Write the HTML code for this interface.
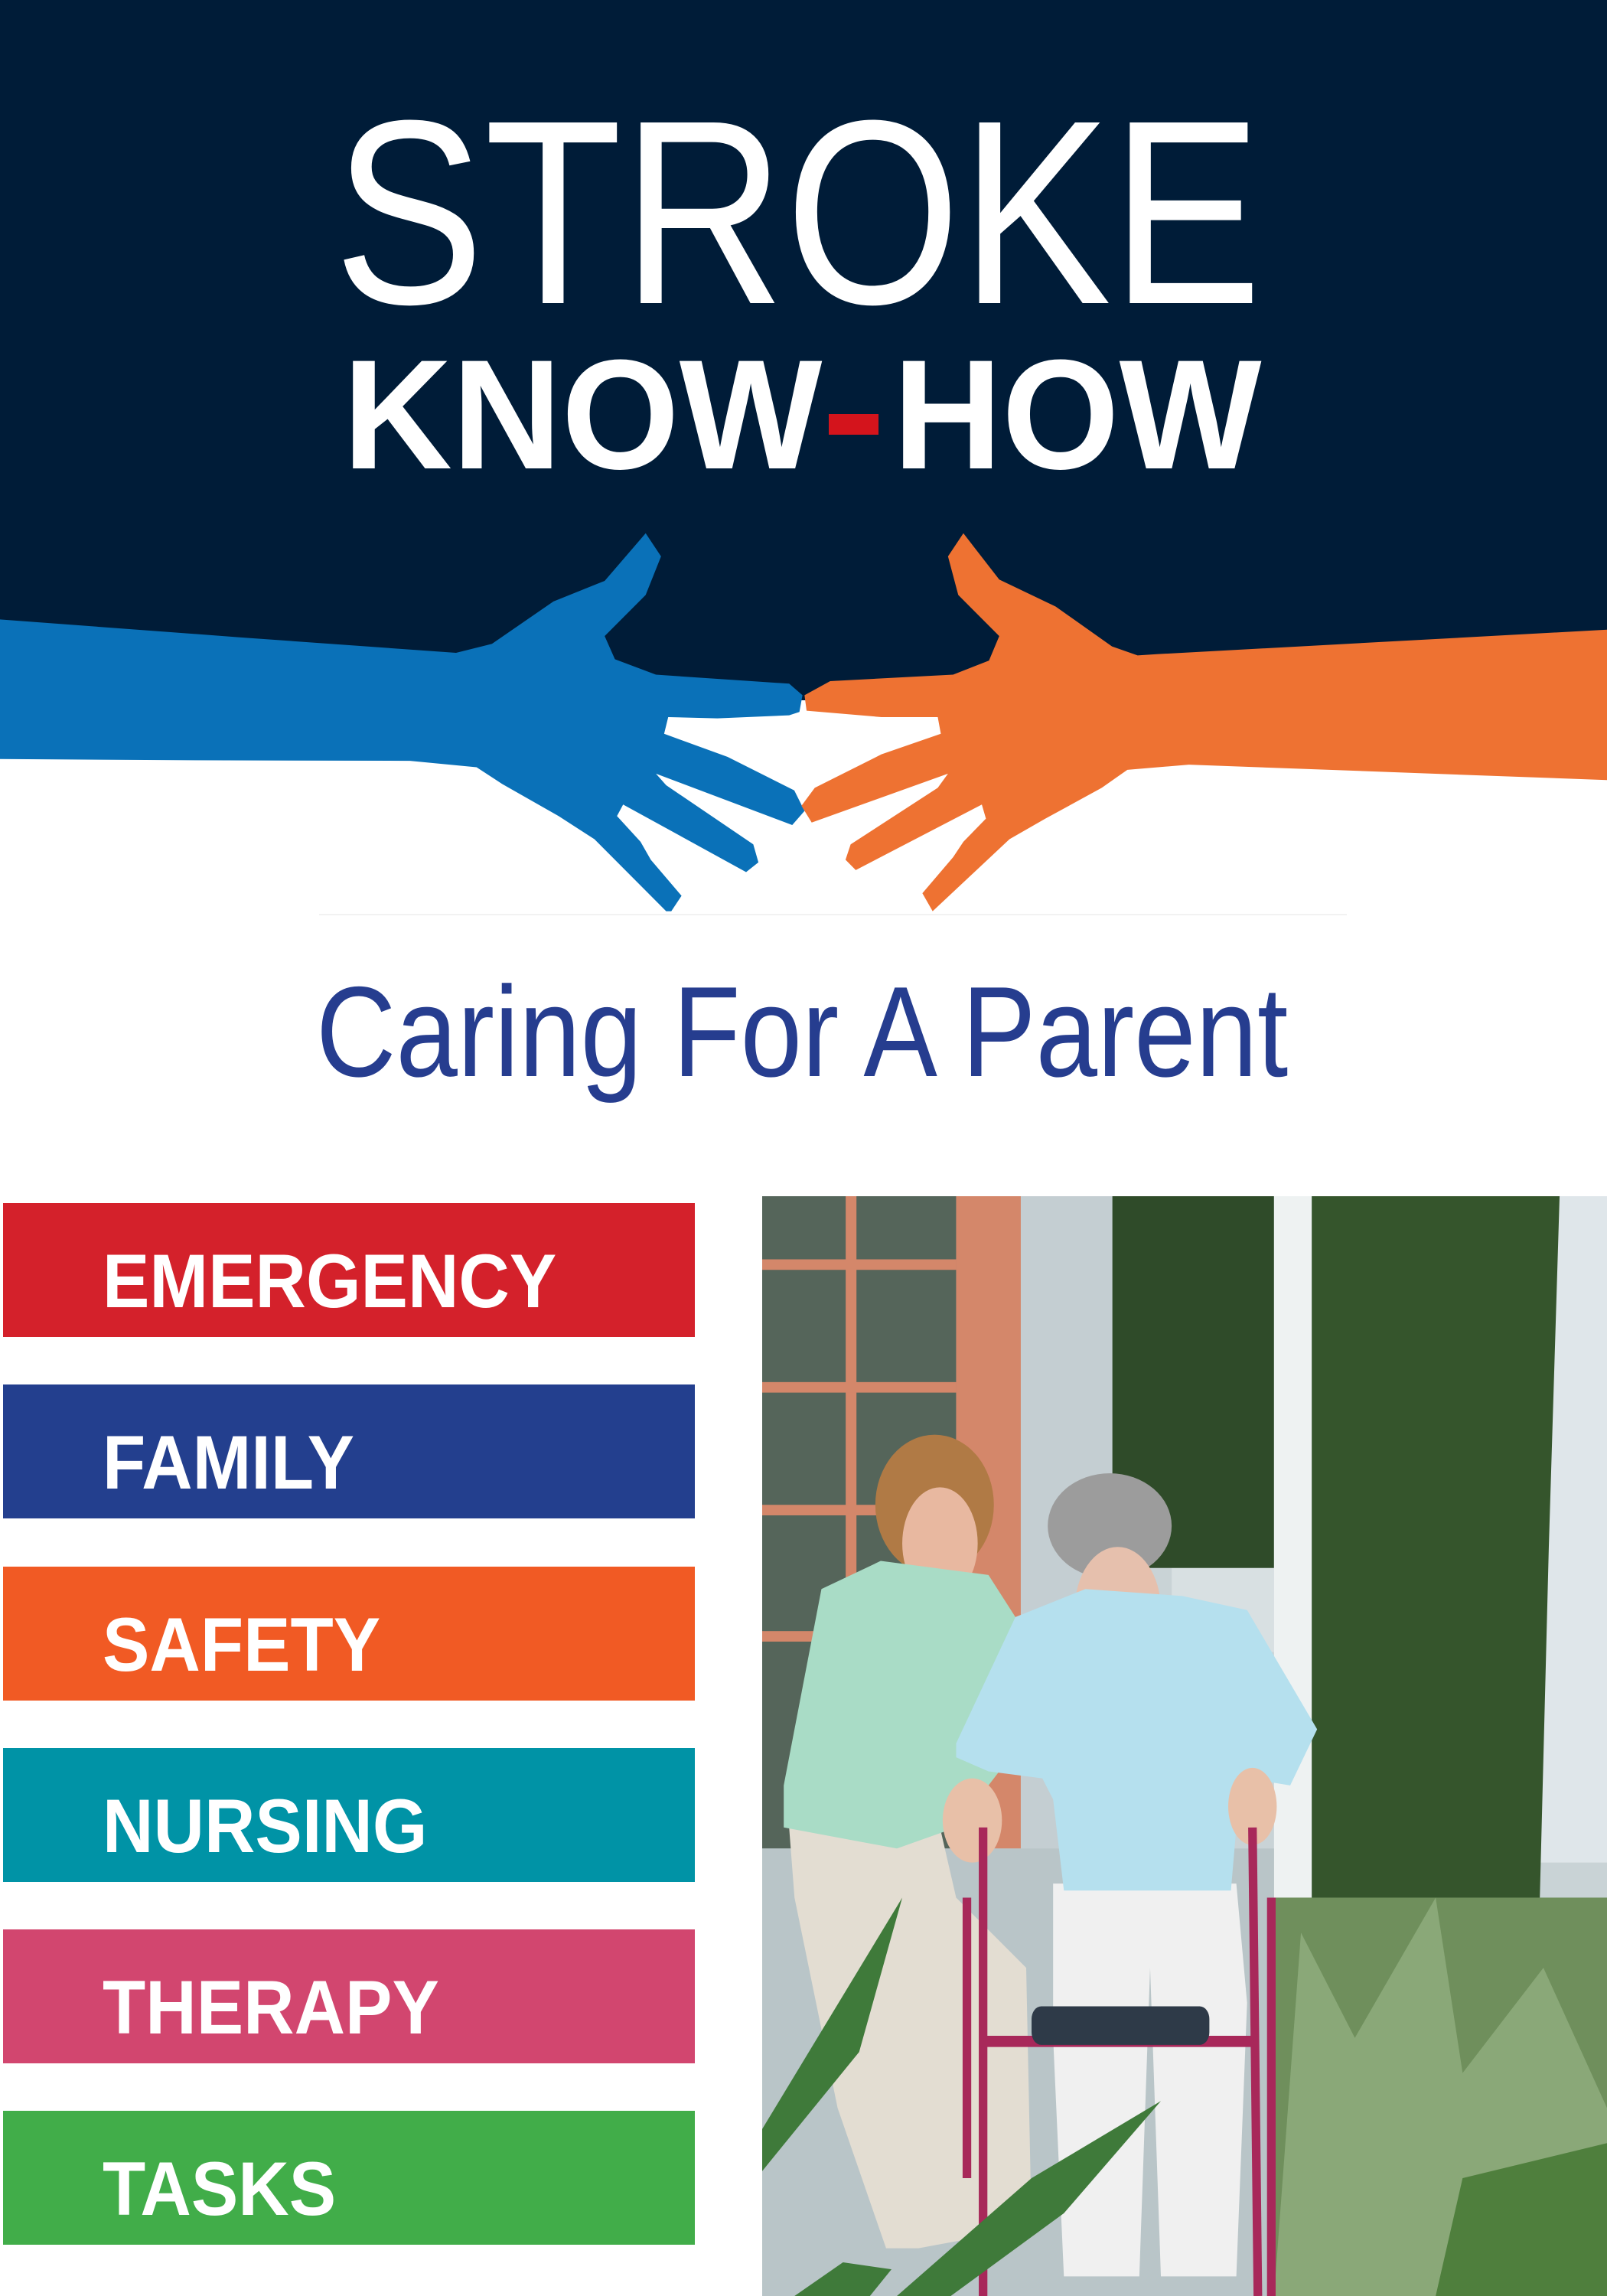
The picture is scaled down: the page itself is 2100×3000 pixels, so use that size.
<!DOCTYPE html>
<html><head><meta charset="utf-8"><style>
html,body{margin:0;padding:0;background:#fff;}
svg{display:block;}
</style></head><body>
<svg width="2100" height="3000" viewBox="0 0 2100 3000" xmlns="http://www.w3.org/2000/svg">
<rect width="2100" height="3000" fill="#fff"/>
<rect width="2100" height="915" fill="#001c38"/>
<g font-family="Liberation Sans, Arial, sans-serif" fill="#fff">
<text transform="translate(436,396) scale(0.86,1)" font-size="343">STROKE</text>
<text transform="translate(448,612) scale(0.97,1)" font-size="204" font-weight="bold">KNOW</text>
<text transform="translate(1167,612) scale(0.966,1)" font-size="204" font-weight="bold">HOW</text>
</g>
<rect x="1083" y="541" width="65" height="27" fill="#d4141c"/>
<svg x="0" y="680" width="2100" height="520" viewBox="0 0 1568 1548" preserveAspectRatio="none">
<path fill="#0a71b8" d="M0,385 L235,455 L445,515 L480,480 L540,315 L590,235 L630,50 L645,140 L630,290 L590,450 L600,540 L640,600 L770,635 L783,680 L780,745 L770,758 L700,770 L652,765 L648,830 L710,920 L775,1050 L785,1130 L773,1185 L640,985 L650,1030 L735,1260 L740,1330 L728,1368 L608,1105 L602,1150 L625,1250 L635,1320 L665,1460 L655,1520 L650,1520 L580,1240 L545,1150 L490,1025 L465,960 L400,935 L190,933 L0,928 Z"/>
<path fill="#ee7232" d="M1568,425 L1130,520 L1110,525 L1085,490 L1030,335 L975,230 L940,50 L925,140 L935,290 L975,450 L965,545 L930,600 L810,625 L785,680 L787,740 L860,765 L915,765 L918,830 L860,910 L795,1040 L782,1110 L792,1175 L925,985 L915,1040 L830,1260 L825,1320 L835,1360 L958,1105 L962,1160 L940,1250 L930,1310 L900,1450 L910,1520 L985,1240 L1020,1160 L1075,1040 L1100,970 L1160,950 L1568,1010 Z"/>
</svg>
<rect x="417" y="1194" width="1343" height="2" fill="#f2f2f2"/>
<text transform="translate(413,1406) scale(0.861,1)" font-family="Liberation Sans, Arial, sans-serif" font-size="168" fill="#263d8f">Caring For A Parent</text>
<g font-family="Liberation Sans, Arial, sans-serif" font-weight="bold" font-size="99" fill="#fff">
<rect x="4" y="1572" width="904" height="175" fill="#d4212b"/>
<text transform="translate(134,1708) scale(0.93,1)">EMERGENCY</text>
<rect x="4" y="1809" width="904" height="175" fill="#233f8e"/>
<text transform="translate(134,1945) scale(0.93,1)">FAMILY</text>
<rect x="4" y="2047" width="904" height="175" fill="#f15a24"/>
<text transform="translate(134,2183) scale(0.93,1)">SAFETY</text>
<rect x="4" y="2284" width="904" height="175" fill="#0093a6"/>
<text transform="translate(134,2420) scale(0.93,1)">NURSING</text>
<rect x="4" y="2521" width="904" height="175" fill="#d2466f"/>
<text transform="translate(134,2657) scale(0.93,1)">THERAPY</text>
<rect x="4" y="2758" width="904" height="175" fill="#41ad49"/>
<text transform="translate(134,2894) scale(0.93,1)">TASKS</text>
</g>
<svg x="996" y="1563" width="1104" height="1437" viewBox="0 0 1568 1568" preserveAspectRatio="none">
<rect width="1568" height="1568" fill="#c9d3d6"/>
<rect x="0" y="0" width="360" height="930" fill="#55655a"/>
<g fill="#d4876a">
<rect x="155" y="0" width="20" height="930"/>
<rect x="0" y="90" width="360" height="15"/>
<rect x="0" y="265" width="360" height="15"/>
<rect x="0" y="440" width="360" height="15"/>
<rect x="0" y="620" width="360" height="15"/>
<rect x="360" y="0" width="120" height="930"/>
</g>
<rect x="480" y="0" width="170" height="930" fill="#c4ced2"/>
<rect x="760" y="530" width="190" height="120" fill="#d8e0e2"/>
<rect x="650" y="0" width="300" height="530" fill="#2f4b29"/>
<rect x="950" y="0" width="125" height="1050" fill="#eef2f2"/>
<rect x="1400" y="0" width="168" height="950" fill="#dfe6ea"/>
<path d="M1020,0 L1480,0 L1460,500 L1440,1100 L1020,1100 Z" fill="#35552c"/>
<rect x="0" y="930" width="950" height="638" fill="#b9c5c8"/>
<rect x="950" y="1000" width="618" height="568" fill="#6f8f5c"/>
<path d="M1000,1050 L1100,1200 L1250,1000 L1300,1250 L1450,1100 L1568,1300 L1568,1568 L950,1568 Z" fill="#8aa878"/>
<path d="M1300,1400 L1568,1350 L1568,1568 L1250,1568 Z" fill="#4f7f3d"/>
<ellipse cx="320" cy="440" rx="110" ry="100" fill="#b07a45"/>
<ellipse cx="330" cy="495" rx="70" ry="80" fill="#e8b8a0"/>
<path d="M50,900 L330,900 L360,1000 L490,1100 L500,1470 L290,1500 L230,1500 L140,1300 L60,1000 Z" fill="#e3ddd2"/>
<path d="M40,840 L110,560 L220,520 L420,540 L470,600 L480,780 L360,900 L250,930 L40,900 Z" fill="#a9dcc6"/>
<ellipse cx="645" cy="470" rx="115" ry="75" fill="#9c9c9c"/>
<ellipse cx="660" cy="590" rx="80" ry="90" fill="#e6c0ad"/>
<path d="M540,980 L880,980 L900,1150 L880,1540 L740,1540 L720,1100 L700,1540 L560,1540 L540,1200 Z" fill="#f0f0f0"/>
<path d="M360,780 L470,600 L600,560 L780,570 L900,590 L1030,760 L980,840 L900,830 L880,900 L870,990 L560,990 L540,860 L520,830 L420,820 L360,800 Z" fill="#b5e0ee"/>
<ellipse cx="390" cy="890" rx="55" ry="60" fill="#e8c0a8"/>
<ellipse cx="910" cy="870" rx="45" ry="55" fill="#e8c0a8"/>
<g stroke="#a8285a" stroke-width="16" fill="none">
<line x1="410" y1="900" x2="410" y2="1568"/>
<line x1="910" y1="900" x2="920" y2="1568"/>
<line x1="380" y1="1000" x2="380" y2="1400"/>
<line x1="945" y1="1000" x2="945" y2="1568"/>
<line x1="410" y1="1205" x2="910" y2="1205"/>
</g>
<rect x="500" y="1155" width="330" height="55" rx="18" fill="#2e3a48"/>
<path d="M0,1330 L260,1000 L180,1220 L0,1390 Z" fill="#3f7a3a"/>
<path d="M250,1568 L500,1400 L740,1290 L560,1450 L350,1568 Z" fill="#3f7a3a"/>
<path d="M60,1568 L150,1520 L240,1530 L200,1568 Z" fill="#3f7a3a"/>
</svg>
</svg>
</body></html>
